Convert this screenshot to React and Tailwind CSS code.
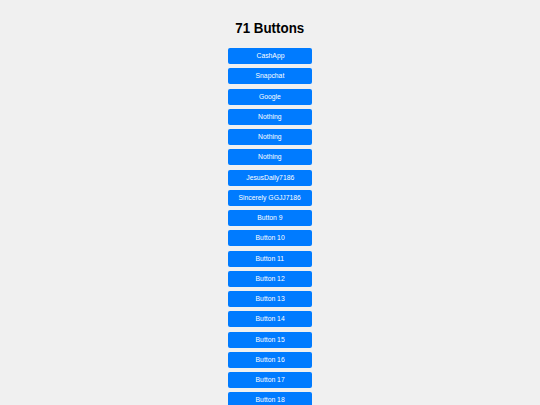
import React from 'react';

const labels = [
  'CashApp',
  'Snapchat',
  'Google',
  'Nothing',
  'Nothing',
  'Nothing',
  'JesusDaily7186',
  'Sincerely GGJJ7186',
];

const buttons = [...labels];
for (let i = labels.length + 1; i <= 71; i++) buttons.push(`Button ${i}`);

export default function App() {
  return (
    <div className="min-h-screen bg-[#f0f0f0] font-['Liberation_Sans',Arial,sans-serif]">
      <div className="flex flex-col items-center pt-[19px]">
        <h1 className="text-[15px] leading-[18px] font-bold text-black scale-x-[0.89]">71 Buttons</h1>
        <div className="mt-[11px] flex flex-col gap-[4.25px]">
          {buttons.map((label, i) => (
            <button
              key={i}
              className="w-[84px] h-[16px] rounded-[2px] bg-[#007bff] text-white text-[8px] leading-[16px] text-center"
            >
              <span className="inline-block scale-x-[0.85] whitespace-nowrap">{label}</span>
            </button>
          ))}
        </div>
      </div>
    </div>
  );
}
